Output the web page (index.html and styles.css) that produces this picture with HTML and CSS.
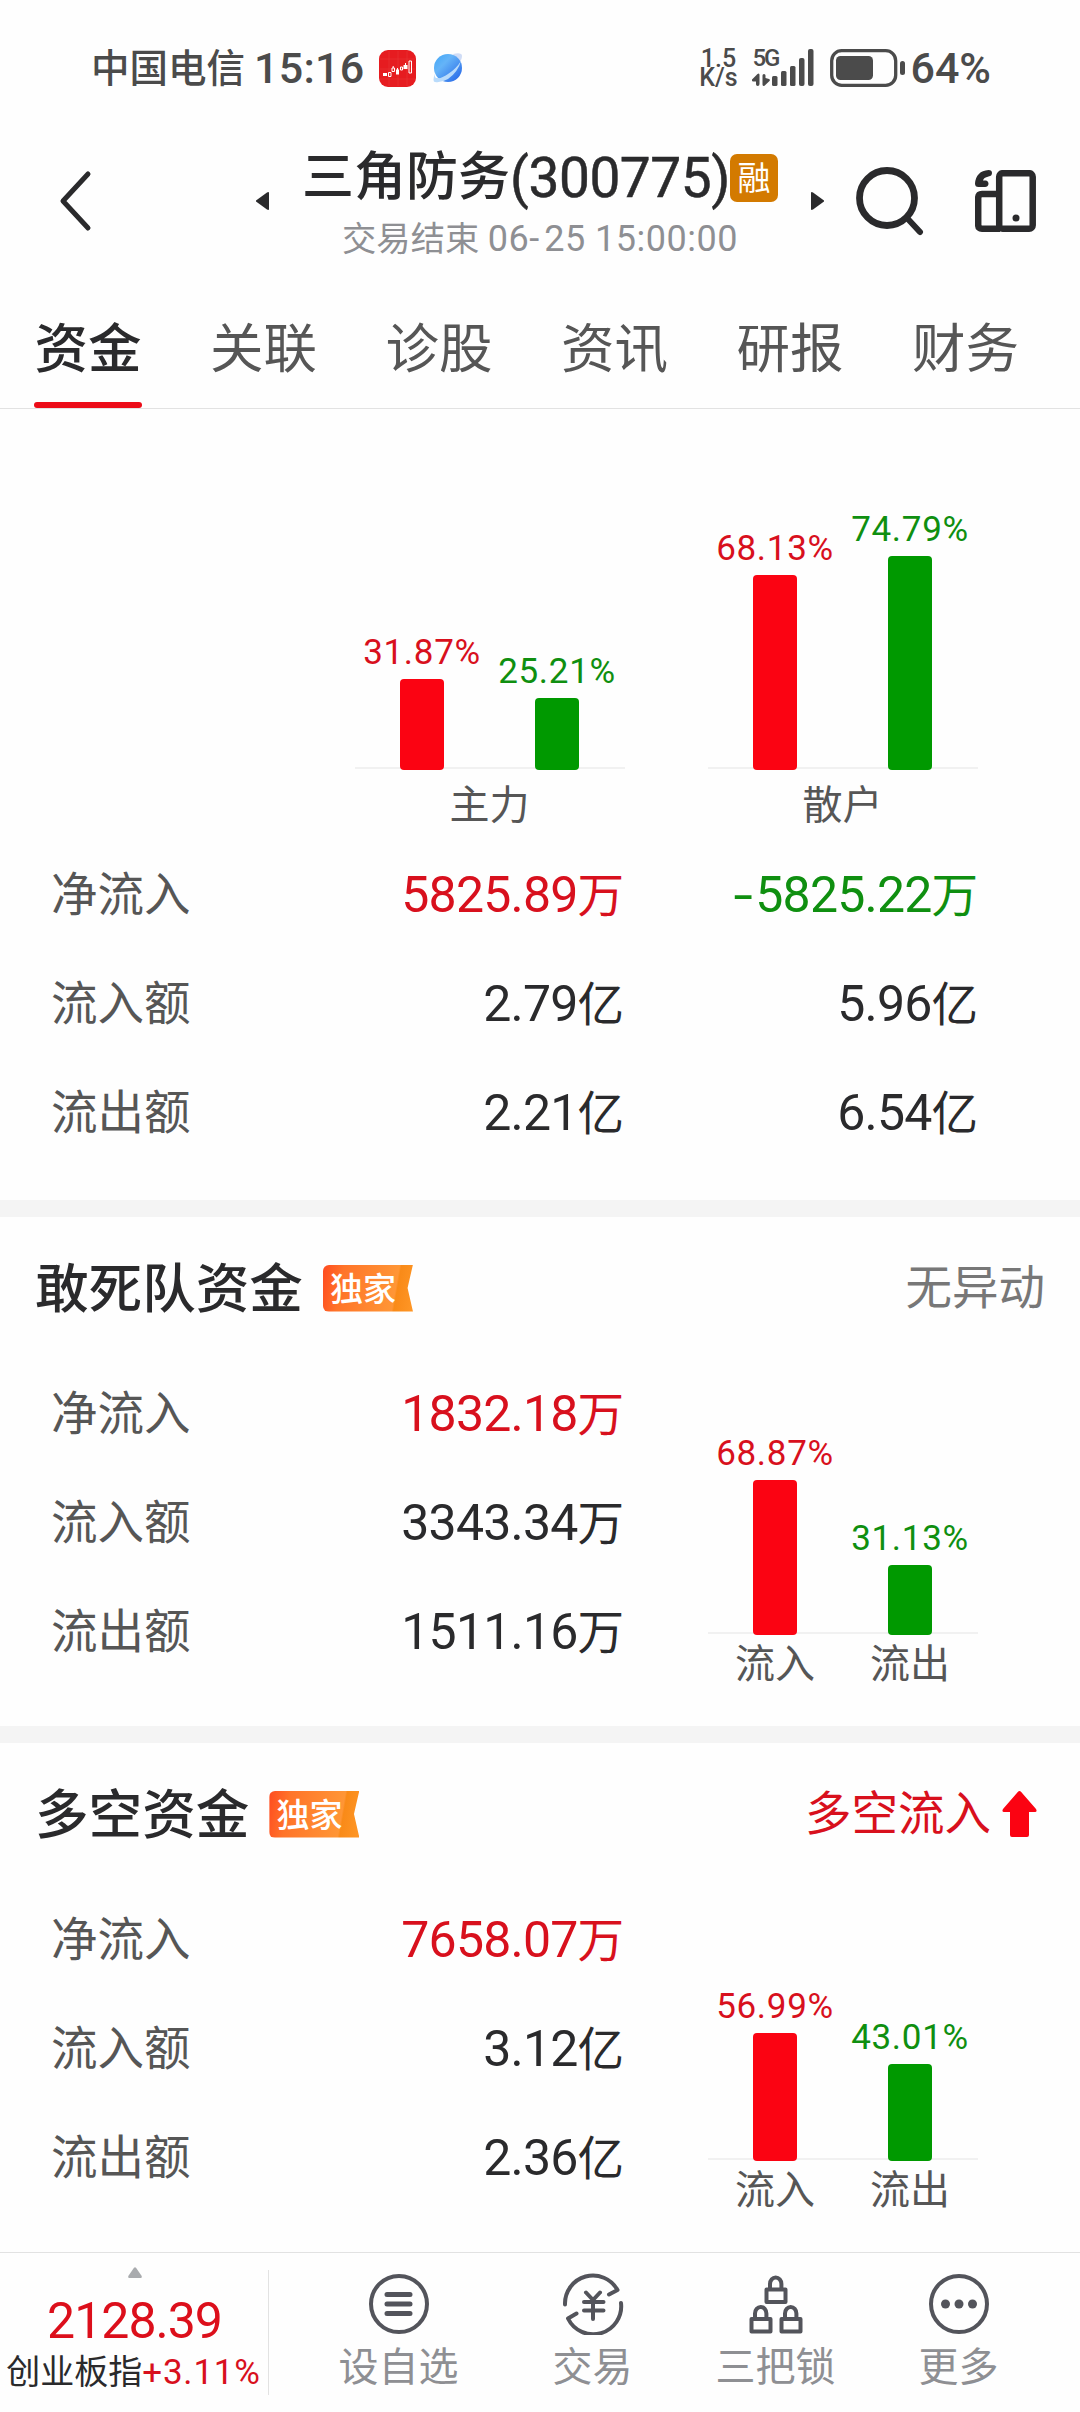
FILE: index.html
```html
<!DOCTYPE html>
<html lang="zh-CN">
<head>
<meta charset="utf-8">
<title>三角防务(300775)</title>
<link rel="stylesheet" href="styles.css">
</head>
<body>
<div class="screen">
  <div class="status">
    <span class="carrier">中国电信</span>
    <span class="clock">15:16</span>
    <svg class="app-icon" width="37" height="37" viewBox="0 0 37 37">
      <rect width="37" height="37" rx="9" fill="#e61c20"/>
      <path d="M1 9h35M1 19h35M1 29h35M10 1v35M19 1v35M28 1v35" stroke="#ea3838" stroke-width=".6"/>
      <path d="M4 23h4v3H4zM17 19.500h3v5h-3zM24.500 15h4v4h-4z" fill="#fff"/>
      <path d="M9.500 22.500h2.500v4H9.500zM13 18h2.500v3.500H13zM21.500 17h2v3h-2zM30 11h2.500v12H30z" fill="none" stroke="#fff"/>
      <path d="M14.200 16v2M18.500 18v2M26.500 13v3" stroke="#fff"/>
    </svg>
    <svg class="planet" width="30" height="30" viewBox="0 0 30 30">
      <defs><linearGradient id="globe" x1="0" y1="0" x2="1" y2="1"><stop offset="0" stop-color="#3fa6f7"/><stop offset=".35" stop-color="#65b4f8"/><stop offset="1" stop-color="#2160e6"/></linearGradient></defs>
      <path d="M20 1Q29-1 29 3Q29 6 26 11z" fill="#cfdcf6"/>
      <circle cx="15" cy="15" r="14" fill="url(#globe)"/>
      <path d="M2 20Q-1 29 2 29Q8 30 15 26Q25 19 28 8Q23 16 15 21Q8 26 4 25Q1 25 2 20z" fill="#b9dbfb"/>
    </svg>
    <div class="status-right">
      <div class="speed"><span>1.5</span><span>K/s</span></div>
      <div class="signal">
        <span class="net">5G</span>
        <svg width="62" height="38" viewBox="0 0 62 38" fill="#4b4b4b">
          <path d="M0 30.500L5.500 25Q7.500 23.500 7.500 26V35Q7.500 37 5.700 37T4 35V32.500H1Q-.500 32 0 30.500zM10.500 26.500Q10.500 25 12 25T13.500 26.500V29L17 30Q18.500 30.500 17.500 32L12.500 36.700Q10.500 37.500 10.500 35.500z"/>
          <rect x="20" y="27" width="5.500" height="10" rx="1.500"/><rect x="29" y="22" width="5.500" height="15" rx="1.500"/><rect x="38" y="17" width="5.500" height="20" rx="1.500"/><rect x="47" y="9" width="5.500" height="28" rx="2"/><rect x="56" y="0" width="5.500" height="37" rx="2"/>
        </svg>
      </div>
      <svg class="battery" width="76" height="38" viewBox="0 0 76 38">
        <rect x="1.700" y="1.700" width="64" height="34.600" rx="10" fill="none" stroke="#4b4b4b" stroke-width="3.300"/>
        <rect x="6" y="7" width="37" height="24" rx="4.500" fill="#4b4b4b"/><rect x="70" y="12" width="5" height="14" rx="2.500" fill="#4b4b4b"/>
      </svg>
      <span class="level">64%</span>
    </div>
  </div>

  <header class="header">
    <svg class="back" width="34" height="62" viewBox="0 0 34 62"><path d="M29 4L4 31L29 58" fill="none" stroke="#2a2a2c" stroke-width="5" stroke-linecap="round" stroke-linejoin="round"/></svg>
    <svg class="prev" width="14" height="20" viewBox="0 0 14 20"><path d="M1 9.500L12 1.500Q14 .500 14 2V18Q14 19.500 12 18.500L1 10.500z" fill="#2a2a2c"/></svg>
    <div class="heading">
      <h1>三角防务<span class="code">(300775)</span><b class="margin-tag">融</b></h1>
      <p>交易结束 <span class="time">06<i>-</i>25 15:00:00</span></p>
    </div>
    <svg class="next" width="14" height="20" viewBox="0 0 14 20"><path d="M13 9.500L2 1.500Q0 .500 0 2V18Q0 19.500 2 18.500L13 10.500z" fill="#2a2a2c"/></svg>
    <svg class="search" width="68" height="70" viewBox="0 0 68 70" fill="none" stroke="#2a2a2c" stroke-linecap="round"><circle cx="31" cy="32" r="27.500" stroke-width="6.800"/><path d="M51 52L64 66" stroke-width="6"/></svg>
    <svg class="devices" width="62" height="62" viewBox="0 0 62 62" fill="none" stroke="#2a2a2c" stroke-width="6.500">
      <rect x="24.200" y="3.200" width="33.500" height="55.500" rx="3.500"/><path d="M24 24H7Q3.200 24 3.200 28V55Q3.200 58.700 7 58.700H25"/>
      <path d="M13.500 0Q17 0 17 3Q17 6 13.500 6.500Q8.500 7.500 8 10.500H11Q13.500 11 13.500 14Q13 17 10 17H3.500Q0 17 0 13.500Q1 1 13.500 0Z" stroke="none" fill="#2a2a2c"/><circle cx="41" cy="48" r="3.500" stroke="none" fill="#2a2a2c"/>
    </svg>
  </header>

  <nav class="tabs">
    <a class="tab active">资金</a><a class="tab">关联</a><a class="tab">诊股</a><a class="tab">资讯</a><a class="tab">研报</a><a class="tab">财务</a>
  </nav>

  <section class="overview">
    <div class="charts">
      <div class="chart">
        <div class="bars">
          <div class="bar up"><span>31.87%</span><i style="height:91px"></i></div>
          <div class="bar down"><span>25.21%</span><i style="height:72px"></i></div>
        </div>
        <div class="axis wide"><span>主力</span></div>
      </div>
      <div class="chart">
        <div class="bars">
          <div class="bar up"><span>68.13%</span><i style="height:195px"></i></div>
          <div class="bar down"><span>74.79%</span><i style="height:214px"></i></div>
        </div>
        <div class="axis wide"><span>散户</span></div>
      </div>
    </div>
    <div class="rows two">
      <div class="row"><span>净流入</span><span class="val up"><b>5825.89</b>万</span><span class="val down"><b><i>-</i>5825.22</b>万</span></div>
      <div class="row"><span>流入额</span><span class="val"><b>2.79</b>亿</span><span class="val"><b>5.96</b>亿</span></div>
      <div class="row"><span>流出额</span><span class="val"><b>2.21</b>亿</span><span class="val"><b>6.54</b>亿</span></div>
    </div>
  </section>

  <section class="panel">
    <div class="panel-head">
      <h2>敢死队资金</h2><span class="exclusive">独家</span>
      <span class="state">无异动</span>
    </div>
    <div class="panel-body">
      <div class="rows">
        <div class="row"><span>净流入</span><span class="val up"><b>1832.18</b>万</span></div>
        <div class="row"><span>流入额</span><span class="val"><b>3343.34</b>万</span></div>
        <div class="row"><span>流出额</span><span class="val"><b>1511.16</b>万</span></div>
      </div>
      <div class="chart">
        <div class="bars">
          <div class="bar up"><span>68.87%</span><i style="height:155px"></i></div>
          <div class="bar down"><span>31.13%</span><i style="height:70px"></i></div>
        </div>
        <div class="axis"><span>流入</span><span>流出</span></div>
      </div>
    </div>
  </section>

  <section class="panel">
    <div class="panel-head">
      <h2>多空资金</h2><span class="exclusive">独家</span>
      <span class="state inflow">多空流入<svg width="35" height="46" viewBox="0 0 35 46"><path d="M15.800 1Q17.500-1 19.200 1L34 18Q35.500 21 33 21H27V44Q27 46 25 46H10Q8 46 8 44V21H2Q-.500 21 1 18z" fill="#fb0312"/></svg></span>
    </div>
    <div class="panel-body">
      <div class="rows">
        <div class="row"><span>净流入</span><span class="val up"><b>7658.07</b>万</span></div>
        <div class="row"><span>流入额</span><span class="val"><b>3.12</b>亿</span></div>
        <div class="row"><span>流出额</span><span class="val"><b>2.36</b>亿</span></div>
      </div>
      <div class="chart">
        <div class="bars">
          <div class="bar up"><span>56.99%</span><i style="height:128px"></i></div>
          <div class="bar down"><span>43.01%</span><i style="height:97px"></i></div>
        </div>
        <div class="axis"><span>流入</span><span>流出</span></div>
      </div>
    </div>
  </section>

  <footer class="footer">
    <div class="index">
      <svg width="14" height="11" viewBox="0 0 14 11"><path d="M6 .800Q7-.500 8 .800L13.700 9Q14 11 13 11H1Q0 11 .300 9z" fill="#a9abae"/></svg>
      <div class="index-value">2128.39</div>
      <div class="index-name">创业板指<span>+3.11%</span></div>
    </div>
    <div class="actions">
      <a class="action three">
        <svg width="62" height="62" viewBox="0 0 62 62"><circle cx="31" cy="31" r="28"/><path d="M19 21.500H42M19 31H42M19 40.500H42" stroke-width="5"/></svg>
        <span>设自选</span>
      </a>
      <a class="action">
        <svg width="62" height="62" viewBox="0 0 62 62"><path d="M3 31.500A28 28 0 0 1 55.500 17L47 21.500M59 30A28 28 0 0 1 6 45.500L14.500 40.500M24 19.500L31 27L38 19.500M31 27V46M22 29H41.500M22 37.500H41.500"/></svg>
        <span>交易</span>
      </a>
      <a class="action three">
        <svg width="62" height="62" viewBox="0 0 62 62"><path d="M21.500 16.500h19v12.500h-19zM25 16V11a5.700 6.500 0 0 1 11.400 0v5M6.500 46h19v12.500h-19zM10 45.500V40.500a5.700 6.500 0 0 1 11.400 0v5M36.500 46h19v12.500h-19zM40 45.500V40.500a5.700 6.500 0 0 1 11.400 0v5"/></svg>
        <span>三把锁</span>
      </a>
      <a class="action">
        <svg width="62" height="62" viewBox="0 0 62 62"><circle cx="31" cy="31" r="28"/><g fill="#53545b" stroke="none"><circle cx="17.500" cy="31" r="4.500"/><circle cx="31" cy="31" r="4.500"/><circle cx="44.500" cy="31" r="4.500"/></g></svg>
        <span>更多</span>
      </a>
    </div>
  </footer>
</div>
</body>
</html>
```
FILE: styles.css
```css
* { box-sizing: border-box; }
body { margin: 0; background: #fefefe; }
svg { display: block; flex: none; }
h1, h2, p { margin: 0; font-weight: 400; }

.screen {
  width: 1080px;
  height: 2412px;
  overflow: hidden;
  background: #fefefe;
  color: #2a2a2c;
  font-family: Roboto, "Noto Sans CJK SC", sans-serif;
  white-space: nowrap;
}

/* System status bar */
.status {
  display: flex;
  align-items: center;
  height: 136px;
  padding-left: 91px;
  padding-right: 89px;
  color: #4b4b4b;
  font-weight: 500;
}
.carrier { width: 163px; font-size: 38.500px; line-height: 60px; padding-top: 2px; }
.clock { width: 125px; font-size: 43px; line-height: 60px; letter-spacing: .3px; }
.planet { margin-left: 17px; }
.status-right { display: flex; align-items: center; margin-left: auto; }
.speed {
  display: flex;
  flex-direction: column;
  align-items: center;
  width: 40px;
  margin-right: 14px;
  font-size: 25px;
  line-height: 19px;
}
.signal { position: relative; margin-right: 16px; }
.net { position: absolute; left: 0; top: 0; font-size: 24px; line-height: 19px; letter-spacing: -2px; }
.battery { margin-right: 4px; }
.level { font-size: 43px; line-height: 60px; }

/* Stock title bar */
.header { display: flex; align-items: center; height: 130px; padding-left: 59px; padding-right: 43px; }
.prev { margin-left: 162px; }
.heading {
  display: flex;
  flex-direction: column;
  align-items: center;
  width: 542px;
  height: 108px;
}
h1 { display: flex; align-items: center; height: 62px; font-size: 52px; line-height: 62px; font-weight: 500; }
.code { font-size: 55px; font-weight: 400; letter-spacing: -.450px; -webkit-text-stroke: .5px #2a2a2c; }
.margin-tag {
  width: 48px;
  height: 48px;
  border-radius: 7px;
  background: #d37a00;
  color: #fff;
  font-size: 33px;
  line-height: 49px;
  font-weight: 400;
  text-align: center;
}
.heading p { margin-top: 7px; color: #8e8f93; font-size: 34.300px; line-height: 46px; }
.time { font-size: 36px; letter-spacing: .500px; }
.time i { font-style: normal; letter-spacing: 5px; }
.search { margin-left: 31px; }
.devices { margin-left: auto; }

/* Tabs */
.tabs {
  display: flex;
  gap: 67.500px;
  height: 143px;
  padding-left: 34px;
  border-bottom: 1px solid #e2e2e2;
}
.tab {
  display: flex;
  flex-direction: column;
  align-items: center;
  width: 108px;
  padding-top: 44px;
  color: #565656;
  font-size: 53.500px;
  line-height: 80px;
}
.tab.active { color: #2a2a2c; font-weight: 500; }
.tab.active::after { content: ""; width: 108px; height: 6px; margin-top: 12px; border-radius: 3px; background: #ec0c18; }

/* Bar charts */
.chart { display: flex; flex-direction: column; justify-content: flex-end; width: 270px; }
.bars {
  display: grid;
  grid-template-columns: 1fr 1fr;
  align-items: end;
  background: linear-gradient(#f1f1f1, #f1f1f1) 0 calc(100% - 1px) / 100% 2px no-repeat;
}
.bar { display: flex; flex-direction: column; align-items: center; }
.bar span { margin-bottom: 6.500px; font-size: 35px; line-height: 40px; letter-spacing: .700px; }
.bar i { width: 44px; border-radius: 4px; }
.bar.up i { background: #fb0312; }
.bar.down i { background: #009900; }
.up { color: #d8101d; }
.down { color: #0f8f10; }
.axis { display: flex; justify-content: space-around; height: 58px; color: #565656; font-size: 40px; line-height: 60px; }
.axis.wide { height: 70px; line-height: 72px; }

/* Data rows */
.row { display: flex; height: 109px; color: #565656; font-size: 46.500px; line-height: 111px; }
.row > span:first-child { width: 156px; }
.rows { width: 624px; padding-left: 51px; }
.val { width: 417px; color: #2a2a2c; text-align: right; }
.val b { font-size: 50px; font-weight: 400; letter-spacing: -.800px; }
.val b i { display: inline-block; margin-right: 6px; font-style: normal; transform: scaleX(1.400); }
.val.up { color: #d8101d; }
.val.down { color: #0f8f10; }
.rows.two { width: 978px; }
.rows.two .val + .val { width: 354px; }

.overview { height: 808px; border-bottom: 17px solid #f4f4f4; }
.charts { display: flex; gap: 83px; height: 431px; padding-left: 354.500px; }

/* Fund panels */
.panel { height: 526px; border-bottom: 17px solid #f4f4f4; }
.panel + .panel { height: 509px; border-bottom: 0; }
.panel-head { display: flex; align-items: center; height: 142px; padding: 0 35px; }
h2 { padding-top: 3px; font-size: 53.600px; line-height: 80px; font-weight: 500; }
.exclusive {
  width: 90px;
  height: 47px;
  margin-left: 20px;
  padding-left: 7px;
  border-radius: 6px 0 0 6px;
  background: linear-gradient(100deg, #ff4b20 0, #ff7429 22%, #ff9636 78%, #f98a18 80%, #ff9727 100%);
  clip-path: polygon(0 0, 100% 0, 94% 50%, 100% 100%, 0 100%);
  color: #fff;
  font-size: 33px;
  font-weight: 500;
  line-height: 49px;
}
.state { display: flex; align-items: center; gap: 11px; margin-left: auto; color: #777; font-size: 46.500px; line-height: 82px; }
.state.inflow { padding-right: 8px; color: #d8101d; }
.panel-body { display: flex; gap: 83.500px; height: 334px; }
.panel-body .chart { height: 334px; }

/* Bottom bar */
.footer { display: flex; height: 160px; border-top: 1px solid #e2e2e2; }
.index {
  display: flex;
  flex-direction: column;
  align-items: center;
  width: 269px;
  padding-top: 14px;
  background: linear-gradient(#e2e2e2, #e2e2e2) 100% 17px / 1px 125px no-repeat;
}
.index-value { margin-top: 13px; color: #dc0f1b; font-size: 50px; line-height: 60px; letter-spacing: -1px; }
.index-name { margin-top: 2px; margin-left: -2px; font-size: 34px; line-height: 38px; }
.index-name span { color: #d8101d; font-size: 35px; letter-spacing: .800px; }
.actions { display: flex; gap: 83px; padding: 20px 0 0 69.500px; }
.action { display: flex; flex-direction: column; align-items: center; width: 80px; color: #8e8f93; font-size: 40px; line-height: 50px; }
.action.three { width: 120px; }
.action:first-child { margin-right: 11px; }
.action span { margin-top: 8px; }
.action svg { fill: none; stroke: #53545b; stroke-width: 4; stroke-linecap: round; stroke-linejoin: round; }
```
